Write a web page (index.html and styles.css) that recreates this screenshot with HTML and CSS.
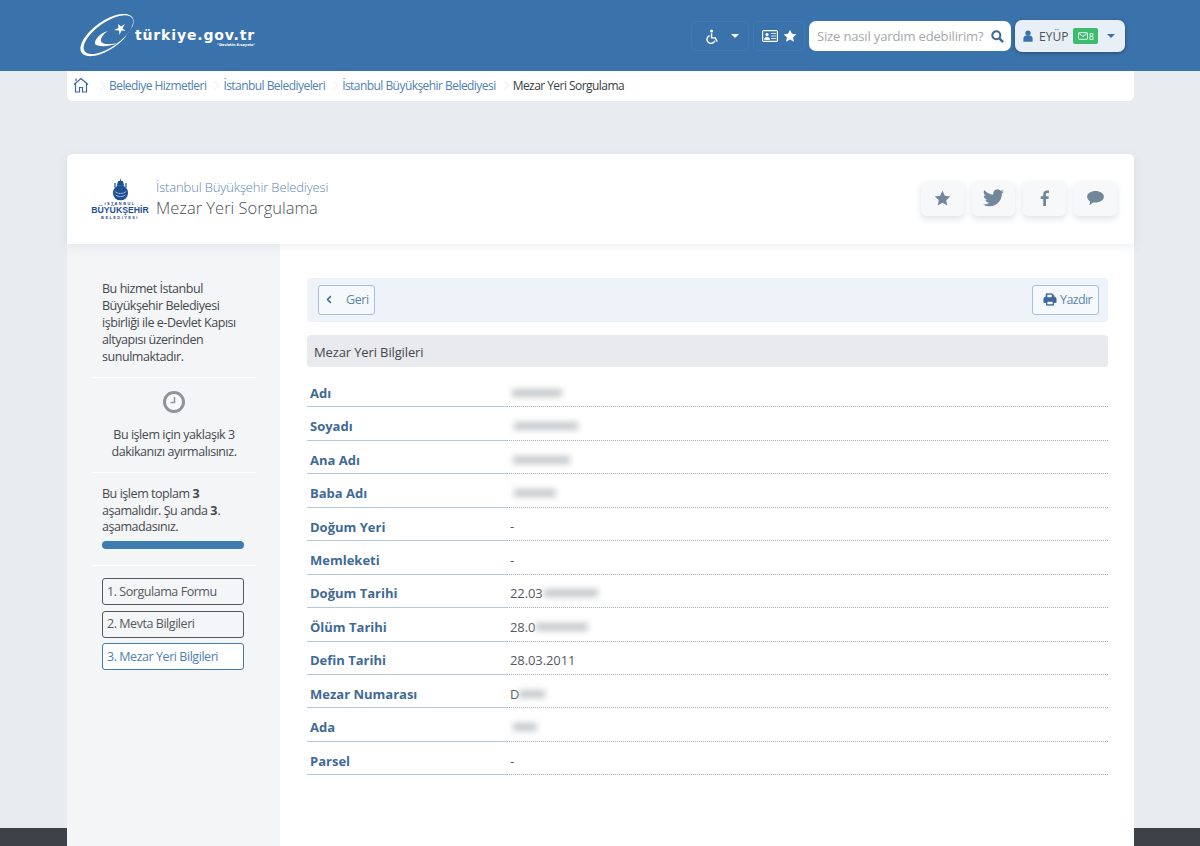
FILE: index.html
```html
<!DOCTYPE html>
<html lang="tr">
<head>
<meta charset="utf-8">
<title>Mezar Yeri Sorgulama</title>
<link rel="stylesheet" href="styles.css">
</head>
<body>
<div class="page">
  <header class="topbar">
    <a class="logo">
      <svg class="logo-mark" viewBox="0 0 56 44" width="56" height="44">
        <ellipse cx="28" cy="21" rx="31" ry="14" transform="rotate(-35 28 21)" fill="#fff"/>
        <ellipse cx="29.400" cy="20.600" rx="29" ry="12.300" transform="rotate(-35 29.400 20.600)" fill="#3a73ab"/>
        <path d="M40 33L60 33L60 8L52 14Z" fill="#3a73ab"/>
        <path d="M29 17C21 19 15 26 16 30C18 33 30 33 39 29C32 30.500 23 31 22 27C21.500 24 25 19 29 17Z" fill="#fff"/>
        <path d="M46 10l-2.500 4.500 3 2.500-4-.5-2 4.500-.5-4.500-5-.5 4.500-2-.5-4 3 2.500z" fill="#fff"/>
      </svg>
      <span class="logo-text">türkiye.gov.tr<small class="logo-sub">"Devletin Kısayolu"</small></span>
    </a>
    <div class="top-tools">
      <div class="tool tool-a11y">
        <svg viewBox="0 0 16 16" width="15" height="15"><circle cx="7" cy="2" r="1.600" fill="#fff"/><path d="M7 4.500v5h4l2 4M5 7a4.300 4.300 0 1 0 5.500 5.500" fill="none" stroke="#fff" stroke-width="1.500"/></svg>
        <i class="caret caret-white"></i>
      </div>
      <div class="tool tool-id">
        <svg viewBox="0 0 16 12" width="16" height="12"><rect x=".6" y=".6" width="14.800" height="10.800" rx="1" fill="none" stroke="#fff" stroke-width="1.200"/><circle cx="5" cy="4.500" r="1.600" fill="#fff"/><path d="M2.500 9.500c0-3 5-3 5 0zM9 3.500h5M9 6h5M9 8.500h5" fill="#fff" stroke="#fff" stroke-width=".8"/></svg>
        <svg viewBox="0 0 16 16" width="14" height="14"><path d="M8 .8l2.200 4.700 5 .6-3.700 3.500 1 5L8 12.100l-4.500 2.500 1-5L.8 6.100l5-.6z" fill="#fff"/></svg>
      </div>
      <div class="search">
        <span class="search-text">Size nasıl yardım edebilirim?</span>
        <svg viewBox="0 0 14 14" width="13" height="13"><circle cx="5.700" cy="5.700" r="4.300" fill="none" stroke="#3a6a9c" stroke-width="2.200"/><path d="M9 9l4 4" stroke="#3a6a9c" stroke-width="2.600"/></svg>
      </div>
      <div class="user">
        <svg viewBox="0 0 12 14" width="10" height="12"><circle cx="6" cy="3.500" r="3.200" fill="#3a73ab"/><path d="M.5 14V10c0-3 2-4 5.500-4s5.500 1 5.500 4v4z" fill="#3a73ab"/></svg>
        <span class="user-name">EYÜP</span>
        <span class="badge"><svg viewBox="0 0 12 9" width="10" height="8"><rect x=".5" y=".5" width="11" height="8" rx="1" fill="none" stroke="#fff"/><path d="M1 1.500l5 3.500 5-3.500" fill="none" stroke="#fff"/></svg>8</span>
        <i class="caret caret-blue"></i>
      </div>
    </div>
  </header>

  <nav class="crumbs">
    <svg class="home" viewBox="0 0 16 16" width="16" height="16"><path d="M1 7.500L8 1.500l7 6M2.500 6.500V15h4v-4.500h3V15h4V6.500M3 4V1.500" fill="none" stroke="#3a6a9c" stroke-width="1.200"/></svg>
    <a class="crumb">Belediye Hizmetleri</a>
    <a class="crumb">İstanbul Belediyeleri</a>
    <a class="crumb">İstanbul Büyükşehir Belediyesi</a>
    <span class="crumb crumb-current">Mezar Yeri Sorgulama</span>
  </nav>

  <main class="card">
    <section class="card-head">
      <div class="ibb">
        <svg viewBox="0 0 18 24" width="17" height="23">
          <path d="M9 0l.8 3h-1.600zM6.500 3h5l1.500 5H5zM2.500 5h1.300v5H2.500zM14.200 5h1.300v5h-1.300z" fill="#1d4f91"/>
          <circle cx="9" cy="15.500" r="8" fill="#1d4f91"/>
          <path d="M3 14c3 3 9 3 12 0M4 18c3 2 7 2 10 0" fill="none" stroke="#9db9d9" stroke-width="1"/>
        </svg>
        <span class="ibb-small">İSTANBUL</span>
        <span class="ibb-big">BÜYÜKŞEHİR</span>
        <span class="ibb-small">BELEDİYESİ</span>
      </div>
      <div class="titles">
        <div class="org">İstanbul Büyükşehir Belediyesi</div>
        <h1 class="title">Mezar Yeri Sorgulama</h1>
      </div>
      <div class="socials">
        <a class="social"><svg viewBox="0 0 16 16" width="17" height="17"><path d="M8 .8l2.200 4.700 5 .6-3.700 3.500 1 5L8 12.100l-4.500 2.500 1-5L.8 6.100l5-.6z"/></svg></a>
        <a class="social"><svg viewBox="0 0 24 20" width="21" height="18"><path d="M24 2.400a10 10 0 0 1-2.800.8A5 5 0 0 0 23.300.5a10 10 0 0 1-3.100 1.200 4.900 4.900 0 0 0-8.400 4.500A14 14 0 0 1 1.700.9a4.900 4.900 0 0 0 1.500 6.600 4.900 4.900 0 0 1-2.200-.6 4.900 4.900 0 0 0 3.900 4.900 4.900 4.900 0 0 1-2.200.1 4.900 4.900 0 0 0 4.600 3.400A9.900 9.900 0 0 1 0 17.300 14 14 0 0 0 7.500 19.500c9.100 0 14.300-7.700 14-14.600A10 10 0 0 0 24 2.400z"/></svg></a>
        <a class="social"><svg viewBox="0 0 9 16" width="9" height="16"><path d="M6 16V9h2.400l.4-2.800H6V4.500c0-.8.300-1.400 1.400-1.400H9V.6C8.700.5 7.800.4 6.900.4 4.700.4 3.200 1.700 3.200 4.200v2H.7V9h2.500v7z"/></svg></a>
        <a class="social"><svg viewBox="0 0 18 15" width="17" height="14"><path d="M9 0c5 0 9 2.700 9 6.200s-4 6.200-9 6.200c-.9 0-1.700-.1-2.500-.2C5.300 13.500 3.500 14.600 2 15c.8-1 1.300-2.300 1.300-3.800C1.300 10 0 8.200 0 6.200 0 2.700 4 0 9 0z"/></svg></a>
      </div>
    </section>

    <div class="card-body">
      <aside class="side">
        <p class="side-block side-intro">Bu hizmet İstanbul Büyükşehir Belediyesi işbirliği ile e-Devlet Kapısı altyapısı üzerinden sunulmaktadır.</p>
        <div class="side-block side-time">
          <svg viewBox="0 0 22 22" width="22" height="22"><circle cx="11" cy="11" r="9.500" fill="#f7f8f9" stroke="#8f9498" stroke-width="3"/><path d="M11.500 6v5.500H7.500" fill="none" stroke="#8f9498" stroke-width="1.500"/></svg>
          <p class="time-text">Bu işlem için yaklaşık 3 dakikanızı ayırmalısınız.</p>
        </div>
        <div class="side-block side-progress">
          <p class="progress-text">Bu işlem toplam <b class="num">3</b> aşamalıdır. Şu anda <b class="num">3</b>. aşamadasınız.</p>
          <div class="progress-bar"></div>
        </div>
        <ol class="steps">
          <li class="step">1. Sorgulama Formu</li>
          <li class="step">2. Mevta Bilgileri</li>
          <li class="step step-active">3. Mezar Yeri Bilgileri</li>
        </ol>
      </aside>

      <div class="content">
        <div class="actions">
          <a class="btn btn-back"><svg viewBox="0 0 8 12" width="6" height="9"><path d="M6.500 1.500L2 6l4.500 4.500" fill="none" stroke="#3a6a9c" stroke-width="2"/></svg><span>Geri</span></a>
          <a class="btn btn-print"><svg viewBox="0 0 16 15" width="14" height="13"><path d="M3.500 5V1h7l2 2v2M3.500 11H1V6.500C1 5.500 1.500 5 2.500 5h11c1 0 1.500.5 1.500 1.500V11h-2.500M4 9h8v5H4z" fill="#3a6a9c" stroke="#3a6a9c"/><path d="M5 2h5v3H5zM5 10h6v3H5z" fill="#fff"/></svg><span>Yazdır</span></a>
        </div>
        <h2 class="section-title">Mezar Yeri Bilgileri</h2>
        <dl class="rows">
          <div class="row"><dt class="key">Adı</dt><dd class="val"><i class="smudge smudge-a"></i></dd></div>
          <div class="row"><dt class="key">Soyadı</dt><dd class="val"><i class="smudge smudge-b"></i></dd></div>
          <div class="row"><dt class="key">Ana Adı</dt><dd class="val"><i class="smudge smudge-c"></i></dd></div>
          <div class="row"><dt class="key">Baba Adı</dt><dd class="val"><i class="smudge smudge-d"></i></dd></div>
          <div class="row"><dt class="key">Doğum Yeri</dt><dd class="val">-</dd></div>
          <div class="row"><dt class="key">Memleketi</dt><dd class="val">-</dd></div>
          <div class="row"><dt class="key">Doğum Tarihi</dt><dd class="val">22.03<i class="smudge smudge-e"></i></dd></div>
          <div class="row"><dt class="key">Ölüm Tarihi</dt><dd class="val">28.0<i class="smudge smudge-f"></i></dd></div>
          <div class="row"><dt class="key">Defin Tarihi</dt><dd class="val">28.03.2011</dd></div>
          <div class="row"><dt class="key">Mezar Numarası</dt><dd class="val">D<i class="smudge smudge-g"></i></dd></div>
          <div class="row"><dt class="key">Ada</dt><dd class="val"><i class="smudge smudge-h"></i></dd></div>
          <div class="row"><dt class="key">Parsel</dt><dd class="val">-</dd></div>
        </dl>
      </div>
    </div>
  </main>
  <footer class="footer"></footer>
</div>
</body>
</html>
```
FILE: styles.css
```css
* { box-sizing: border-box; }
html, body { margin: 0; padding: 0; height: 846px; overflow: hidden; }
body { background: #e8ebef; font-family: "Open Sans", "Liberation Sans", sans-serif; color: #4a4f54; font-size: 13px; }
p, h1, h2, dl, dd, ol { margin: 0; padding: 0; }
.page { height: 846px; display: flex; flex-direction: column; overflow: hidden; }

.topbar { flex: none; height: 71px; background: #3a73ab; display: flex; align-items: flex-start; justify-content: space-between; padding: 14px 75px 0 79px; }
.logo { display: flex; align-items: center; color: #fff; height: 43px; }
.logo-mark { flex: none; }
.logo-text { font-family: "DejaVu Sans", sans-serif; font-weight: 700; font-size: 14px; letter-spacing: .85px; line-height: 15px; display: block; white-space: nowrap; margin-top: 4px; }
.logo-sub { display: block; font-size: 3.500px; line-height: 4px; text-align: right; font-weight: 700; letter-spacing: 0; }
.top-tools { display: flex; align-items: center; gap: 4px; padding-top: 6px; }
.tool { height: 30px; border: 1px solid #4379af; border-radius: 6px; display: flex; align-items: center; justify-content: center; }
.tool-a11y { width: 58px; gap: 11px; padding-left: 3px; }
.tool-id { width: 52px; gap: 5px; }
.caret { display: block; width: 0; height: 0; border-left: 4px solid transparent; border-right: 4px solid transparent; border-top: 4px solid #fff; }
.caret-blue { border-top-color: #3a73ab; margin-left: 4px; }
.search { width: 202px; height: 30px; background: #fff; border-radius: 7px; display: flex; align-items: center; justify-content: space-between; padding: 0 7px 0 8px; }
.search-text { font-size: 13px; letter-spacing: -.15px; color: #a4a8ac; white-space: nowrap; }
.user { width: 110px; height: 32px; background: #e9eff7; border-radius: 7px; box-shadow: 0 1px 4px rgba(0,0,0,.35); display: flex; align-items: center; gap: 5px; padding-left: 8px; }
.user-name { font-size: 12px; color: #4b5158; margin-left: 1px; }
.badge { height: 16px; width: 25px; background: #3dbb6e; color: #fff; border-radius: 2px; font-size: 9px; display: flex; align-items: center; justify-content: center; gap: 1px; }

.crumbs { flex: none; margin: 0 66px 0 67px; height: 30px; background: #fff; border-radius: 0 0 6px 6px; display: flex; align-items: center; padding: 0 0 2px 6px; gap: 17px; white-space: nowrap; }
.home { margin-right: 3px; }
.crumb { position: relative; font-size: 12px; letter-spacing: -.55px; color: #4f81b3; }
.crumb::before { content: ""; position: absolute; left: -12px; top: 5px; width: 6px; height: 6px; border-top: 1px solid #eceff2; border-right: 1px solid #eceff2; transform: rotate(45deg); }
.crumb-current { color: #3a3e42; }

.card { flex: none; position: relative; z-index: 1; margin: 53px 66px 0 67px; height: 692px; background: #fff; border-radius: 6px 6px 0 0; display: flex; flex-direction: column; }
.card-head { flex: none; height: 90px; display: flex; align-items: center; padding: 0 17px 0 25px; box-shadow: 0 3px 10px rgba(60,80,100,.08); position: relative; }
.ibb { width: 56px; display: flex; flex-direction: column; align-items: center; color: #1d4f91; font-family: "Liberation Sans", sans-serif; font-weight: 700; line-height: 1; }
.ibb-small { font-size: 4px; letter-spacing: 1.400px; line-height: 5px; white-space: nowrap; }
.ibb-big { font-size: 8.700px; line-height: 9px; white-space: nowrap; }
.titles { margin-left: 8px; flex: 1; }
.org { font-size: 13px; font-weight: 300; letter-spacing: -.13px; line-height: 18px; color: #5f86b3; }
.title { font-size: 16.500px; font-weight: 300; line-height: 24px; color: #4a4f54; }
.socials { display: flex; gap: 8px; margin-top: -2px; }
.social { width: 43px; height: 35px; border-radius: 5px; background: #f7f8fa; box-shadow: 0 3px 6px rgba(60,80,100,.16); display: flex; align-items: center; justify-content: center; }
.social svg { fill: #72879c; }

.card-body { flex: 1; display: flex; min-height: 0; }
.side { flex: none; width: 213px; background: #f3f5f7; padding: 0 24px 0 25px; }
.side-block { border-bottom: 1px solid #fff; padding: 0 10px; font-size: 12.500px; line-height: 17px; letter-spacing: -.45px; color: #45494e; }
.side-intro { padding-top: 36px; height: 134px; padding-bottom: 12px; }
.side-time { height: 95px; padding-top: 13px; text-align: center; display: flex; flex-direction: column; align-items: center; }
.time-text { margin-top: 13px; width: 144px; }
.side-progress { height: 93px; padding: 13px 12px 0 10px; line-height: 16.700px; }
.num { letter-spacing: 0; }
.progress-bar { height: 8px; margin-top: 5px; border-radius: 4px; background: #3f7cb2; }
.steps { list-style: none; margin: 12px 12px 0 10px; display: flex; flex-direction: column; gap: 5.500px; }
.step { height: 27px; border: 1px solid #55595e; border-radius: 3px; display: flex; align-items: center; padding: 0 0 1px 4px; font-size: 12.500px; letter-spacing: -.45px; color: #55595e; }
.step-active { border-color: #3f7cb2; color: #4f81b3; background: #fff; }

.content { flex: 1; padding: 34px 26px 0 27px; min-width: 0; }
.actions { height: 44px; background: #edf3f9; border-radius: 3px; display: flex; align-items: center; justify-content: space-between; padding: 0 9px 0 11px; }
.btn { height: 30px; border: 1px solid #a9bfd4; border-radius: 3px; background: #f6f9fc; display: flex; align-items: center; color: #5d86ad; font-size: 12.500px; letter-spacing: -.4px; padding-bottom: 1px; }
.btn-back { width: 57px; padding-left: 7px; gap: 14px; }
.btn-print { width: 67px; padding-left: 10px; gap: 3px; letter-spacing: -.6px; }
.section-title { margin-top: 13px; height: 32px; background: #e8eaed; border-radius: 4px; font-size: 13px; font-weight: 400; line-height: 34px; padding-left: 7px; letter-spacing: -.13px; color: #44484d; }
.rows { margin-top: 7px; }
.row { height: 33.450px; display: grid; grid-template-columns: 200px 1fr; }
.key { border-bottom: 1px solid #b4cade; font-weight: 700; color: #3f6a96; padding: 9.800px 0 0 3px; line-height: 18px; white-space: nowrap; }
.val { border-bottom: 1px dotted #a9adb1; color: #55595e; padding: 5px 0 0 3px; line-height: 18px; display: flex; align-items: center; height: 100%; letter-spacing: -.1px; }
.smudge { display: block; height: 8px; background: #c4c8cb; filter: blur(3px); }
.smudge-a { width: 50px; margin-left: 2px; }
.smudge-b { width: 64px; margin-left: 4px; }
.smudge-c { width: 57px; margin-left: 3px; }
.smudge-d { width: 42px; margin-left: 4px; }
.smudge-e { width: 54px; margin-left: 1px; }
.smudge-f { width: 52px; margin-left: 1px; }
.smudge-g { width: 26px; }
.smudge-h { width: 24px; margin-left: 3px; }

.footer { flex: none; height: 18px; margin-top: -18px; background: #3d4248; }
```
